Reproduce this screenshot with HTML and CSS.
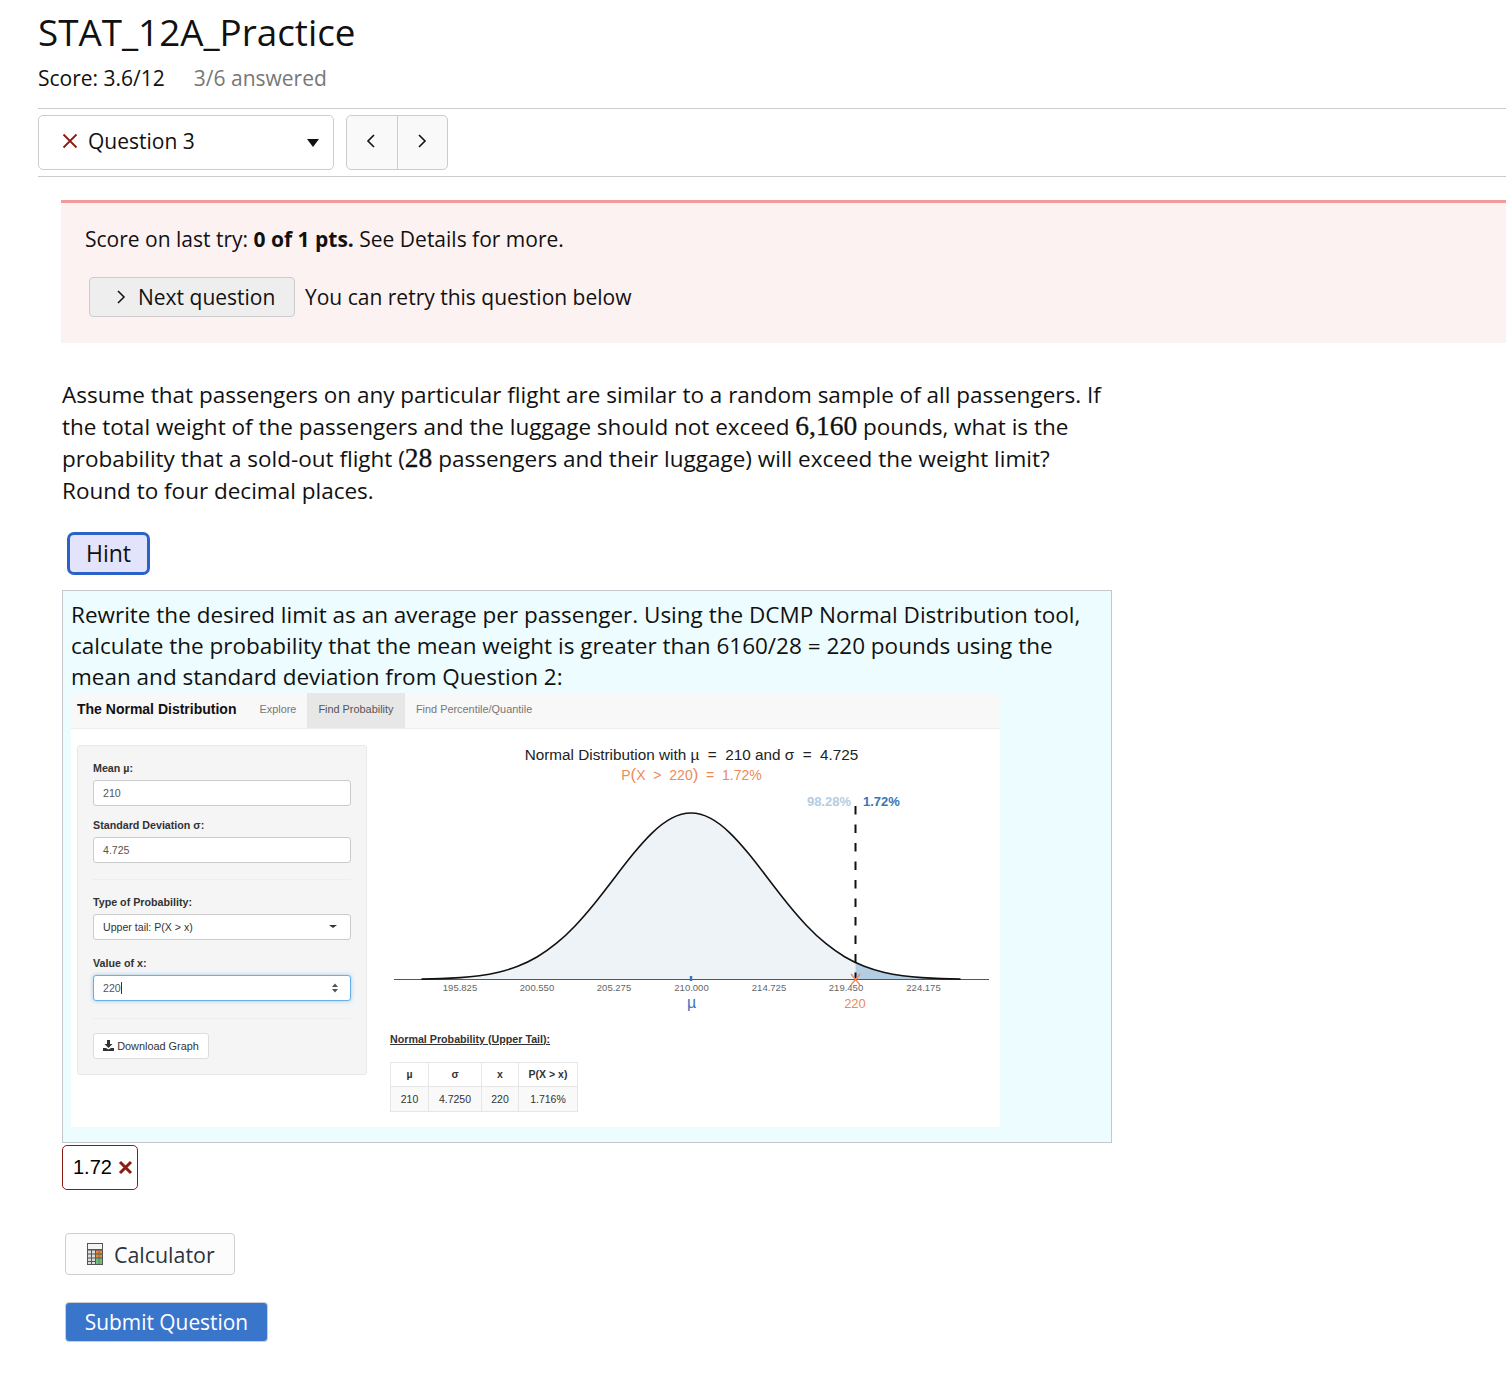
FILE: index.html
```html
<!DOCTYPE html>
<html lang="en">
<head>
<meta charset="UTF-8">
<title>STAT_12A_Practice</title>
<link rel="stylesheet" href="styles.css">
</head>
<body>
<header class="page-head">
  <h1 class="title">STAT_12A_Practice</h1>
  <div class="score-line">
    <span>Score: 3.6/12</span>
    <span class="answered">3/6 answered</span>
  </div>
</header>

<nav class="question-nav">
  <div class="question-select">
    <svg class="x-icon" width="16" height="16" viewBox="0 0 16 16"><path d="M1.5 1.5L14.5 14.5M14.5 1.5L1.5 14.5" stroke="#8a1c12" stroke-width="1.8" fill="none"/></svg>
    <span>Question 3</span>
    <span class="select-arrow"></span>
  </div>
  <div class="pager">
    <div class="pager-btn"><svg width="10" height="16" viewBox="0 0 10 16"><path d="M8 2L2 8L8 14" stroke="#111" stroke-width="1.6" fill="none"/></svg></div>
    <div class="pager-btn"><svg width="10" height="16" viewBox="0 0 10 16"><path d="M2 2L8 8L2 14" stroke="#111" stroke-width="1.6" fill="none"/></svg></div>
  </div>
</nav>

<section class="alert">
  <p class="alert-score">Score on last try: <strong>0 of 1 pts.</strong> See Details for more.</p>
  <div class="alert-next">
    <div class="next-btn">
      <svg width="10" height="16" viewBox="0 0 10 16"><path d="M2 2L8 8L2 14" stroke="#111" stroke-width="1.5" fill="none"/></svg>
      <span>Next question</span>
    </div>
    <span>You can retry this question below</span>
  </div>
</section>

<main class="question">
  <p class="question-text">Assume that passengers on any particular flight are similar to a random sample of all passengers. If the total weight of the passengers and the luggage should not exceed <span class="math">6,160</span> pounds, what is the probability that a sold-out flight (<span class="math">28</span> passengers and their luggage) will exceed the weight limit? Round to four decimal places.</p>

  <div class="hint-btn">Hint</div>

  <div class="hint-box">
    <p class="hint-text">Rewrite the desired limit as an average per passenger. Using the DCMP Normal Distribution tool, calculate the probability that the mean weight is greater than 6160/28 = 220 pounds using the mean and standard deviation from Question 2:</p>

    <div class="shot">
      <div class="shot-nav">
        <span class="shot-brand">The Normal Distribution</span>
        <span class="shot-tab">Explore</span>
        <span class="shot-tab active">Find Probability</span>
        <span class="shot-tab">Find Percentile/Quantile</span>
      </div>
      <div class="shot-body">
        <div class="well">
          <label class="field-label">Mean µ:</label>
          <div class="field">210</div>
          <label class="field-label">Standard Deviation σ:</label>
          <div class="field">4.725</div>
          <div class="well-rule first"></div>
          <label class="field-label">Type of Probability:</label>
          <div class="field field-select">Upper tail: P(X &gt; x)<span class="mini-arrow"></span></div>
          <label class="field-label">Value of x:</label>
          <div class="field field-focus"><span class="caret-text">220</span>
            <svg width="8" height="10" viewBox="0 0 8 10"><path d="M4 0.5L7 4H1ZM4 9.5L1 6H7Z" fill="#555"/></svg>
          </div>
          <div class="well-rule"></div>
          <div class="download-btn">
            <svg width="11" height="11" viewBox="0 0 11 11"><path d="M4 0H7V4H9.5L5.5 8L1.5 4H4ZM0 8H3L5.5 9.5L8 8H11V11H0Z" fill="#333"/></svg>
            <span>Download Graph</span>
          </div>
        </div>

        <div class="plot-col">
          <svg class="plot" width="620" height="275" viewBox="380 745 620 275">
            <defs>
              <path id="half" d="M691 813C697.42 813 703.83 814.77 710.25 818.13C716.67 821.49 723.08 826.44 729.5 832.56C735.92 838.68 742.33 845.98 748.75 853.83C755.17 861.68 761.58 870.1 768 878.52C774.42 886.94 780.83 895.34 787.25 903.28C793.67 911.22 800.08 918.68 806.5 925.44C812.92 932.2 819.33 938.24 825.75 943.49C832.17 948.74 838.58 953.21 845 956.97C851.42 960.73 857.83 963.77 864.25 966.25C870.67 968.73 877.08 970.67 883.5 972.19C889.92 973.71 896.33 974.83 902.75 975.7C909.17 976.57 915.58 977.19 922 977.65C928.42 978.11 934.83 978.42 941.25 978.65C947.67 978.88 954.08 979.02 960.5 979.13"/>
              <path id="half-area" d="M691 813C697.42 813 703.83 814.77 710.25 818.13C716.67 821.49 723.08 826.44 729.5 832.56C735.92 838.68 742.33 845.98 748.75 853.83C755.17 861.68 761.58 870.1 768 878.52C774.42 886.94 780.83 895.34 787.25 903.28C793.67 911.22 800.08 918.68 806.5 925.44C812.92 932.2 819.33 938.24 825.75 943.49C832.17 948.74 838.58 953.21 845 956.97C851.42 960.73 857.83 963.77 864.25 966.25C870.67 968.73 877.08 970.67 883.5 972.19C889.92 973.71 896.33 974.83 902.75 975.7C909.17 976.57 915.58 977.19 922 977.65C928.42 978.11 934.83 978.42 941.25 978.65C947.67 978.88 954.08 979.02 960.5 979.13V979.5H691Z"/>
              <clipPath id="left-of-x"><rect x="380" y="745" width="475.5" height="275"/></clipPath>
              <clipPath id="right-of-x"><rect x="855.5" y="745" width="145" height="275"/></clipPath>
            </defs>
            <text class="plot-title" x="691.5" y="760">Normal Distribution with µ &#160;=&#160; 210 and σ &#160;=&#160; 4.725</text>
            <text class="plot-sub" x="691.5" y="780">P<tspan class="paren">(</tspan>X &#160;&gt;&#160; 220<tspan class="paren">)</tspan> &#160;=&#160; 1.72%</text>
            <text class="pct-light" x="851" y="806">98.28%</text>
            <text class="pct-dark" x="863" y="806">1.72%</text>

            <g class="area-light" clip-path="url(#left-of-x)">
              <use href="#half-area"/>
              <use href="#half-area" transform="matrix(-1 0 0 1 1382 0)"/>
            </g>
            <g class="area-dark" clip-path="url(#right-of-x)">
              <use href="#half-area"/>
            </g>
            <path class="axis" d="M394 979.5H989"/>
            <path class="mean-tick" d="M691 976V981"/>
            <use class="curve" href="#half"/>
            <use class="curve" href="#half" transform="matrix(-1 0 0 1 1382 0)"/>
            <path class="cut-line" d="M855.5 806V979"/>
            <path class="cut-mark" d="M851 974L860 985M860 974L851 985"/>

            <g class="tick-labels">
              <text x="460" y="990.5">195.825</text>
              <text x="537" y="990.5">200.550</text>
              <text x="614" y="990.5">205.275</text>
              <text x="691.5" y="990.5">210.000</text>
              <text x="769" y="990.5">214.725</text>
              <text x="846" y="990.5">219.450</text>
              <text x="923.5" y="990.5">224.175</text>
            </g>
            <text class="mu-label" x="691.5" y="1007.5">µ</text>
            <text class="x-label" x="855" y="1007.5">220</text>
          </svg>

          <div class="prob-title">Normal Probability (Upper Tail):</div>
          <table class="prob-table">
            <tr><th class="c1">µ</th><th class="c2">σ</th><th class="c3">x</th><th class="c4">P(X &gt; x)</th></tr>
            <tr><td>210</td><td>4.7250</td><td>220</td><td>1.716%</td></tr>
          </table>
        </div>
      </div>
    </div>
  </div>

  <div class="answer">
    <span>1.72</span>
    <svg width="15" height="15" viewBox="0 0 15 15"><path d="M2 2L13 13M13 2L2 13" stroke="#8a1c12" stroke-width="3" fill="none"/></svg>
  </div>

  <div class="calc-btn">
    <svg width="16" height="22" viewBox="0 0 16 22">
      <rect width="16" height="22" fill="#555"/>
      <rect x="1" y="1" width="14" height="5" fill="#f4f4f4"/>
      <g fill="#dcdcdc">
        <rect x="1" y="7.5" width="3" height="3"/><rect x="5" y="7.5" width="3" height="3"/>
        <rect x="1" y="11.5" width="3" height="3"/><rect x="5" y="11.5" width="3" height="3"/>
        <rect x="1" y="15.5" width="3" height="2.5"/><rect x="5" y="15.5" width="3" height="2.5"/>
        <rect x="1" y="19" width="3" height="2"/><rect x="5" y="19" width="3" height="2"/>
      </g>
      <g fill="#e08a3c">
        <rect x="9" y="7.5" width="2.7" height="3"/><rect x="12.3" y="7.5" width="2.7" height="3"/>
        <rect x="9" y="11.5" width="2.7" height="3"/><rect x="12.3" y="11.5" width="2.7" height="3"/>
      </g>
      <g fill="#6cc07a">
        <rect x="9" y="15.5" width="2.7" height="5.5"/><rect x="12.3" y="15.5" width="2.7" height="5.5"/>
      </g>
    </svg>
    <span>Calculator</span>
  </div>

  <div class="submit-btn">Submit Question</div>
</main>
</body>
</html>
```

FILE: styles.css
```css
html, body {
  margin: 0;
  padding: 0;
}
body {
  font-family: "Open Sans", "Noto Sans", sans-serif;
  color: #111;
  background-color: white;
  height: 1382px;
  overflow: hidden;
}
p {
  margin: 0;
}

/* Page header */
.page-head {
  padding: 9px 0 0 38px;
}
.title {
  margin: 0;
  font-size: 36.8px;
  line-height: 46px;
  font-weight: 400;
}
.score-line {
  display: flex;
  gap: 29px;
  margin-top: 9px;
  font-size: 21px;
  line-height: 28px;
  padding-bottom: 16px;
}
.answered {
  color: #777;
}

/* Question picker */
.question-nav {
  margin-left: 38px;
  border-top: 1px solid #ccc;
  border-bottom: 1px solid #ccc;
  padding: 6px 0;
  display: flex;
  gap: 12px;
}
.question-select {
  width: 296px;
  height: 55px;
  box-sizing: border-box;
  border: 1px solid #ccc;
  border-radius: 5px;
  display: flex;
  align-items: center;
  padding: 0 14px 4px 23px;
  font-size: 21px;
  gap: 10px;
}
.select-arrow {
  margin: 4px 0 0 auto;
  width: 0;
  height: 0;
  border-left: 6px solid transparent;
  border-right: 6px solid transparent;
  border-top: 8px solid #111;
}
.pager {
  display: flex;
  height: 55px;
  box-sizing: border-box;
  border: 1px solid #ccc;
  border-radius: 5px;
  background-color: #f9f9f9;
}
.pager-btn {
  width: 50px;
  display: flex;
  align-items: center;
  justify-content: center;
  padding: 0 2px 4px 0;
  box-sizing: border-box;
}
.pager-btn + .pager-btn {
  border-left: 1px solid #ccc;
}

/* Score alert */
.alert {
  margin: 23px 0 0 61px;
  height: 143px;
  box-sizing: border-box;
  border-top: 3px solid #f59a9a;
  background-color: #fdf2f2;
  padding: 21px 0 0 24px;
  font-size: 21px;
}
.alert-score {
  line-height: 30px;
}
.alert-next {
  display: flex;
  align-items: center;
  gap: 10px;
  margin: 23px 0 0 4px;
}
.next-btn {
  width: 206px;
  height: 40px;
  box-sizing: border-box;
  display: flex;
  align-items: center;
  gap: 12px;
  padding-left: 26px;
  background-color: #eee;
  border: 1px solid #ccc;
  border-radius: 4px;
}

/* Question body */
.question {
  margin-left: 62px;
  width: 1050px;
}
.question-text {
  margin-top: 36px;
  font-size: 22.5px;
  line-height: 32px;
}
.math {
  font-family: "Liberation Serif", serif;
  font-size: 27.5px;
  line-height: 1;
  -webkit-text-stroke: 0.3px #111;
}
.hint-btn {
  margin: 25px 0 0 5px;
  width: 83px;
  height: 43px;
  box-sizing: border-box;
  border: 3px solid #2a62c8;
  border-radius: 7px;
  background-color: #e3e3fb;
  display: flex;
  align-items: center;
  justify-content: center;
  padding-bottom: 2px;
  font-size: 23px;
}
.hint-box {
  margin-top: 15px;
  height: 553px;
  box-sizing: border-box;
  border: 1px solid #c4c8cc;
  background-color: #edfdff;
  padding: 8px 8px 0;
}
.hint-text {
  font-size: 22.5px;
  line-height: 31.2px;
}

/* Pasted screenshot of the distribution tool */
.shot {
  width: 929px;
  height: 434px;
  background-color: white;
  font-family: "Liberation Sans", Arial, sans-serif;
  color: #333;
}
.shot-nav {
  height: 36px;
  display: flex;
  align-items: stretch;
  background-color: #f8f8f8;
  border-bottom: 1px solid #eee;
  box-sizing: border-box;
  font-size: 10.9px;
  color: #777;
}
.shot-brand {
  display: flex;
  align-items: center;
  padding: 0 12px 2px 6px;
  font-size: 14px;
  font-weight: bold;
  color: #111;
}
.shot-tab {
  display: flex;
  align-items: center;
  padding: 0 11px 2px;
}
.shot-tab.active {
  background-color: #e7e7e7;
  color: #555;
  padding: 0 11.5px 2px 11px;
}
.shot-body {
  display: flex;
  padding: 16px 0 0 6px;
  gap: 13px;
}
.well {
  width: 290px;
  height: 330px;
  box-sizing: border-box;
  background-color: #f5f5f5;
  border: 1px solid #e8e8e8;
  border-radius: 3px;
  padding: 16px 15px 0;
}
.field-label {
  display: block;
  font-size: 10.7px;
  font-weight: bold;
  line-height: 13px;
  margin-bottom: 5px;
}
.field {
  height: 26px;
  box-sizing: border-box;
  background-color: white;
  border: 1px solid #ccc;
  border-radius: 3px;
  display: flex;
  align-items: center;
  justify-content: space-between;
  padding: 0 11px 0 9px;
  font-size: 10.6px;
  color: #555;
  margin-bottom: 13px;
}
.field-select {
  color: #333;
  margin-bottom: 17px;
  padding-right: 13px;
}
.field-focus {
  border-color: #66afe9;
  box-shadow: 0 0 4px rgba(102, 175, 233, 0.6);
  margin-bottom: 17px;
}
.caret-text {
  border-right: 1px solid #333;
}
.mini-arrow {
  width: 0;
  height: 0;
  border-left: 4px solid transparent;
  border-right: 4px solid transparent;
  border-top: 3px solid #333;
}
.well-rule {
  height: 1px;
  background-color: #eee;
  margin-bottom: 14px;
}
.well-rule.first {
  margin: 16px 0 16px;
}
.download-btn {
  width: 116px;
  height: 26px;
  box-sizing: border-box;
  background-color: white;
  border: 1px solid #ddd;
  border-radius: 3px;
  display: flex;
  align-items: center;
  justify-content: center;
  gap: 3px;
  font-size: 10.9px;
}
.plot-col {
  width: 620px;
}
.plot {
  display: block;
}
.plot text {
  font-family: "Liberation Sans", Arial, sans-serif;
}
.plot-title {
  font-size: 15.3px;
  fill: #222;
  text-anchor: middle;
}
.plot-sub {
  font-size: 14px;
  fill: #ee8a5a;
  text-anchor: middle;
}
.paren {
  font-size: 17px;
}
.pct-light {
  font-size: 13px;
  font-weight: bold;
  fill: #b3cde3;
  text-anchor: end;
}
.pct-dark {
  font-size: 13px;
  font-weight: bold;
  fill: #3a75b5;
}
.area-light {
  fill: #eef3f8;
}
.area-dark {
  fill: #b3cde3;
}
.axis {
  stroke: #555;
  stroke-width: 1;
  fill: none;
}
.mean-tick {
  stroke: #3a75b5;
  stroke-width: 2.5;
  fill: none;
}
.curve {
  fill: none;
  stroke: #111;
  stroke-width: 1.6;
}
.cut-line {
  stroke: #111;
  stroke-width: 2;
  stroke-dasharray: 8.5 10;
  fill: none;
}
.cut-mark {
  stroke: #ee8a5a;
  stroke-width: 1.3;
  fill: none;
}
.tick-labels text {
  font-size: 9.5px;
  fill: #666;
  text-anchor: middle;
}
.mu-label {
  font-size: 16px;
  fill: #3a75b5;
  text-anchor: middle;
}
.x-label {
  font-size: 13px;
  fill: #ee8a5a;
  text-anchor: middle;
}
.prob-title {
  margin: 12px 0 0 10px;
  font-size: 10.7px;
  font-weight: bold;
  text-decoration: underline;
  line-height: 14px;
}
.prob-table {
  margin: 16px 0 0 10px;
  border-collapse: collapse;
  table-layout: fixed;
  font-size: 10.5px;
}
.prob-table th, .prob-table td {
  border: 1px solid #e6e6e6;
  padding: 0;
  height: 23.5px;
  text-align: center;
}
.prob-table td {
  background-color: #f9f9f9;
}
.c1 { width: 37px; }
.c2 { width: 52px; }
.c3 { width: 36px; }
.c4 { width: 58px; }

/* Answer and action buttons */
.answer {
  margin-top: 2px;
  width: 76px;
  height: 45px;
  box-sizing: border-box;
  background-color: white;
  border: 1px solid #8a1c12;
  border-radius: 5px;
  display: flex;
  align-items: center;
  gap: 6px;
  padding-left: 10px;
  font-family: "Liberation Sans", Arial, sans-serif;
  font-size: 20px;
  color: black;
}
.calc-btn {
  margin: 43px 0 0 3px;
  width: 170px;
  height: 42px;
  box-sizing: border-box;
  border: 1px solid #ccd0d4;
  border-radius: 4px;
  background-color: #fcfcfc;
  display: flex;
  align-items: center;
  gap: 11px;
  padding-left: 21px;
  font-size: 21.4px;
  color: #2a3440;
}
.submit-btn {
  margin: 27px 0 0 3px;
  width: 203px;
  height: 40px;
  box-sizing: border-box;
  border: 1px solid #ccd0d4;
  border-radius: 4px;
  background-color: #3a75cc;
  color: white;
  display: flex;
  align-items: center;
  justify-content: center;
  font-size: 20.9px;
}
```
